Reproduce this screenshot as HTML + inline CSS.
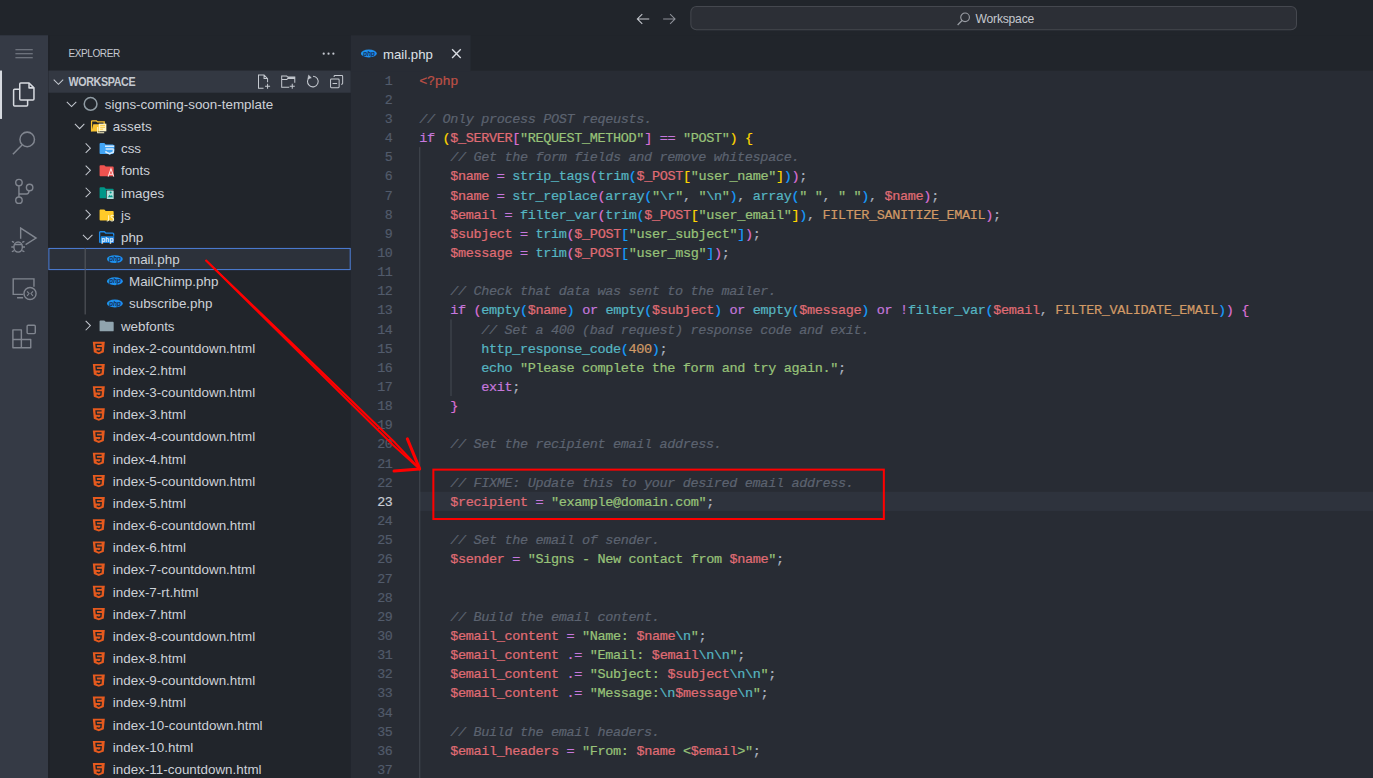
<!DOCTYPE html><html><head><meta charset="utf-8"><style>*{margin:0;padding:0;box-sizing:border-box}
html,body{width:1373px;height:778px;overflow:hidden;background:#21252b}
#root{position:absolute;left:0;top:0;width:1363px;height:772px;transform:scale(1.0078);transform-origin:0 0;overflow:hidden;font-family:"Liberation Sans",sans-serif}
.abs{position:absolute}
#title{left:0;top:0;width:1363px;height:35px;background:#21252b}
#act{left:0;top:35px;width:48px;height:737px;background:#353a45}
#side{left:48px;top:35px;width:300px;height:737px;background:#21252b}
#tabs{left:348px;top:35px;width:1015px;height:35px;background:#21252b}
#editor{left:348px;top:70px;width:1015px;height:702px;background:#282c34}
.row{position:absolute;height:22px;font-size:13.3px;line-height:22px;color:#cdd1d8;white-space:pre}
.row .tx{position:absolute;top:0.5px}
.ln{position:absolute;left:0;width:41.5px;text-align:right;font-family:"Liberation Mono",monospace;font-size:13.2px;letter-spacing:-0.3px;margin-top:1px;-webkit-text-stroke:0.2px currentColor;line-height:19px;height:19px;color:#525b6b;white-space:pre}
.cl{position:absolute;left:68px;font-family:"Liberation Mono",monospace;font-size:13.4px;letter-spacing:-0.343px;line-height:19px;height:19px;white-space:pre;color:#abb2bf;margin-top:0.6px;-webkit-text-stroke:0.2px currentColor}
.c{color:#5c6370;font-style:italic}
.k{color:#c678dd}.o{color:#c678dd}
.v{color:#e06c75}.s{color:#98c379}.f{color:#56b6c2}.e{color:#56b6c2}
.p{color:#abb2bf}.n{color:#d19a66}.K{color:#d19a66}.t{color:#be5046}
.b1{color:#ffd700}.b2{color:#da70d6}.b3{color:#179fff}
</style></head><body><div id="root">
<div id="title" class="abs"></div><div id="act" class="abs"></div><div id="side" class="abs"></div><div id="tabs" class="abs"></div><div id="editor" class="abs"></div>
<div class="abs" style="left:48px;top:35px;width:1px;height:737px;background:#1e2126"></div>
<svg class="abs" style="left:630px;top:10.6px" width="16" height="16" viewBox="0 0 16 16"><path d="M7.3 2.9 2.4 7.8 7.3 12.7M2.6 7.8H14.2" fill="none" stroke="#c5c8ce" stroke-width="1.05"/></svg>
<svg class="abs" style="left:656px;top:10.6px" width="16" height="16" viewBox="0 0 16 16"><path d="M8.9 2.9 13.8 7.8 8.9 12.7M13.6 7.8H2" fill="none" stroke="#8d9098" stroke-width="1.05"/></svg>
<div class="abs" style="left:685px;top:6px;width:602px;height:24px;border:1px solid #45484f;border-radius:6px;background:#2c2f36"></div>
<svg class="abs" style="left:948px;top:10.5px" width="16" height="16" viewBox="0 0 16 16"><circle cx="9.6" cy="6.2" r="4.3" fill="none" stroke="#9a9da4" stroke-width="1.1"/><path d="M6.6 9.3 2.2 13.8" stroke="#9a9da4" stroke-width="1.2"/></svg>
<div class="abs" style="left:968px;top:11px;font-size:12px;line-height:16px;color:#c5c8ce;letter-spacing:-0.2px">Workspace</div>
<svg class="abs" style="left:0;top:35px" width="48" height="35"><path d="M15.3 14.3H32.5M15.3 18.3H32.5M15.3 22.4H32.5" stroke="#80858f" stroke-width="1"/></svg>
<div class="abs" style="left:0;top:70px;width:2px;height:48px;background:#d7dae0"></div>
<svg class="abs" style="left:0;top:70px" width="48" height="48"><g fill="none" stroke="#d7dae0" stroke-width="1.5" stroke-linejoin="round">
<path d="M19.6 13.3Q19.6 12.3 20.6 12.3H28.8L33.7 17.2V28.3Q33.7 29.3 32.7 29.3H20.6Q19.6 29.3 19.6 28.3Z"/><path d="M28.8 12.3V17.2H33.7"/>
<path d="M19.6 18.6H14.5Q13.5 18.6 13.5 19.6V34.1Q13.5 35.1 14.5 35.1H26.4Q27.4 35.1 27.4 34.1V29.3"/></g></svg>
<svg class="abs" style="left:0;top:118px" width="48" height="48"><g fill="none" stroke="#80858f" stroke-width="1.5"><circle cx="27" cy="20.3" r="7.2"/><path d="M12.8 35 21.9 25.9"/></g></svg>
<svg class="abs" style="left:0;top:166px" width="48" height="48"><g fill="none" stroke="#80858f" stroke-width="1.4"><circle cx="18.8" cy="15.2" r="3.2"/><circle cx="29.4" cy="20" r="3.2"/><circle cx="18.8" cy="32.6" r="3.2"/><path d="M18.8 18.4V29.4M19 26.5H26.2Q28.6 26.5 28.9 23.2"/></g></svg>
<svg class="abs" style="left:0;top:214px" width="48" height="48"><g fill="none" stroke="#80858f" stroke-width="1.4" stroke-linejoin="miter"><path d="M20.5 22.9V12.3L35.8 22.2 25.4 28.8"/><ellipse cx="18" cy="31.2" rx="4.2" ry="5"/><path d="M14 28.6H22M14 26.6 11.8 25.6M22 26.6 24.2 25.6M13.8 31.1H11.2M22.2 31.1H24.8M14 34.6 11.8 35.8M22 34.6 24.2 35.8"/></g></svg>
<svg class="abs" style="left:0;top:262px" width="48" height="48"><g fill="none" stroke="#80858f" stroke-width="1.4"><path d="M23.2 30.1H13.1V14.75H33.7V22.6"/><path d="M16.9 33.4H22.9"/><circle cx="29.8" cy="29.2" r="6"/><path d="M26.9 27.1 28.8 29.3 26.9 31.5M32.7 27.1 30.8 29.3 32.7 31.5" stroke-width="1.1"/></g></svg>
<svg class="abs" style="left:0;top:310px" width="48" height="48"><g fill="none" stroke="#80858f" stroke-width="1.4" stroke-linejoin="round"><path d="M12.8 17.3H21.2V26.9H30.5V35H12.8Z"/><path d="M12.8 26.9H21.2V35"/><rect x="26.9" y="12.7" width="8.1" height="8.3" rx="1"/></g></svg>
<div class="abs" style="left:68px;top:44.8px;font-size:11.6px;line-height:16px;color:#c5c9d0;letter-spacing:-0.5px;transform:scaleX(0.86);transform-origin:0 0">EXPLORER</div>
<svg class="abs" style="left:318px;top:45px" width="16" height="16" viewBox="0 0 16 16"><g fill="#c5c9d0"><circle cx="3.2" cy="8.3" r="1.1"/><circle cx="8" cy="8.3" r="1.1"/><circle cx="12.8" cy="8.3" r="1.1"/></g></svg>
<div class="abs" style="left:48px;top:70px;width:300px;height:22px;background:#333842"></div>
<svg class="abs" style="left:50px;top:73px" width="16" height="16" viewBox="0 0 16 16"><path d="M3.3 6 8 10.7 12.7 6" fill="none" stroke="#c5c9d0" stroke-width="1"/></svg>
<div class="abs" style="left:68px;top:72.6px;font-size:11.8px;font-weight:bold;line-height:16px;color:#c5c9d0;letter-spacing:-0.4px;transform:scaleX(0.9);transform-origin:0 0">WORKSPACE</div>
<svg class="abs" style="left:252.5px;top:73px" width="16" height="16" viewBox="0 0 16 16"><g fill="none" stroke="#c5c9d0" stroke-width="1"><path d="M8.5 14.5H3.5V1.5H9L12.5 5V8.5M9 1.5V5H12.5M12.5 10V15M10 12.5H15"/></g></svg>
<svg class="abs" style="left:278px;top:73px" width="16" height="16" viewBox="0 0 16 16"><g fill="none" stroke="#c5c9d0" stroke-width="1"><path d="M9 13.5H1.5V2.5H6.5L7.5 3.5H14.5V9M1.5 6H6.5L7.5 5H14.5M12 10V15M9.5 12.5H14.5"/><rect x="7.5" y="3.5" width="7" height="1.5" fill="#c5c9d0" stroke="none"/></g></svg>
<svg class="abs" style="left:302px;top:73px" width="16" height="16" viewBox="0 0 16 16"><g fill="none" stroke="#c5c9d0" stroke-width="1.05"><path d="M5.6 3.4A5.3 5.3 0 1 0 8.6 2.6"/><path d="M4.2 1.6 6.9 4.2 3.6 5.2Z" fill="#c5c9d0" stroke-width="0.6"/></g></svg>
<svg class="abs" style="left:326px;top:73px" width="16" height="16" viewBox="0 0 16 16"><g fill="none" stroke="#c5c9d0" stroke-width="1"><path d="M5.5 3.5V2.8Q5.5 2 6.3 2H13.2Q14 2 14 2.8V9.7Q14 10.5 13.2 10.5H12.5"/><rect x="2" y="5.5" width="8.5" height="8.5" rx="0.8"/><path d="M4 9.8H8.5"/></g></svg>
<div class="abs" style="left:48px;top:246px;width:300px;height:22px;background:#2c313a;border:1px solid #4d7fd9"></div>
<div class="abs" style="left:83.6px;top:246px;width:1px;height:66px;background:#585b61"></div>
<div class="row" style="left:48px;top:92px;width:300px"><div style="position:absolute;left:-48px;top:0;width:348px;height:22px"><svg class="abs" style="left:63px;top:3px" width="16" height="16" viewBox="0 0 16 16"><path d="M3.3 6 8 10.7 12.7 6" fill="none" stroke="#c5c9d0" stroke-width="1"/></svg><svg class="abs" style="left:82px;top:3px" width="16" height="16" viewBox="0 0 16 16"><circle cx="7.9" cy="8.1" r="6.3" fill="none" stroke="#8f9ba3" stroke-width="1.5"/></svg><span class="tx" style="left:104px">signs-coming-soon-template</span></div></div>
<div class="row" style="left:48px;top:114px;width:300px"><div style="position:absolute;left:-48px;top:0;width:348px;height:22px"><svg class="abs" style="left:71px;top:3px" width="16" height="16" viewBox="0 0 16 16"><path d="M3.3 6 8 10.7 12.7 6" fill="none" stroke="#c5c9d0" stroke-width="1"/></svg><svg class="abs" style="left:90px;top:3px" width="16" height="16" viewBox="0 0 16 16"><path d="M0.8 13.6V3.7Q0.8 2.9 1.6 2.9H5.6L6.8 4H13.4V6" fill="none" stroke="#f9c330" stroke-width="1.3"/><path d="M2.6 6.3H9.2V13.6H0.8Z" fill="#f9c330"/><rect x="8" y="5.7" width="7.6" height="7.6" fill="#fff6c8"/><path d="M9.4 7.4H14.2M9.4 9.3H14.2M9.4 11.2H12.3" stroke="#f9c330" stroke-width="0.9"/><path d="M6.9 9V14.8H13.4" fill="none" stroke="#fff6c8" stroke-width="1"/></svg><span class="tx" style="left:112px">assets</span></div></div>
<div class="row" style="left:48px;top:136px;width:300px"><div style="position:absolute;left:-48px;top:0;width:348px;height:22px"><svg class="abs" style="left:79px;top:3px" width="16" height="16" viewBox="0 0 16 16"><path d="M6 3.3 10.7 8 6 12.7" fill="none" stroke="#c5c9d0" stroke-width="1"/></svg><svg class="abs" style="left:98px;top:3px" width="16" height="16" viewBox="0 0 16 16"><path d="M0.8 3.8Q0.8 2.9 1.7 2.9H5.5L6.9 4.3H13.9Q14.8 4.3 14.8 5.2V12.9Q14.8 13.8 13.9 13.8H1.7Q0.8 13.8 0.8 12.9Z" fill="#42a5f5"/><path d="M5.8 5.2H15.8L15.2 12.6 10.8 14.6 6.4 12.6Z" fill="#42a5f5"/><path d="M6.2 6.1H15.2M6.8 8.9H14.7M14.7 8.9 14.4 12 10.8 13.6 7.2 12 7 11" fill="none" stroke="#d6eafc" stroke-width="1.5"/></svg><span class="tx" style="left:120px">css</span></div></div>
<div class="row" style="left:48px;top:158px;width:300px"><div style="position:absolute;left:-48px;top:0;width:348px;height:22px"><svg class="abs" style="left:79px;top:3px" width="16" height="16" viewBox="0 0 16 16"><path d="M6 3.3 10.7 8 6 12.7" fill="none" stroke="#c5c9d0" stroke-width="1"/></svg><svg class="abs" style="left:98px;top:3px" width="16" height="16" viewBox="0 0 16 16"><path d="M0.8 3.8Q0.8 2.9 1.7 2.9H5.5L6.9 4.3H13.9Q14.8 4.3 14.8 5.2V12.9Q14.8 13.8 13.9 13.8H1.7Q0.8 13.8 0.8 12.9Z" fill="#ef5350"/><path d="M9.3 14.2 12.1 6.4 14.9 14.2M10.3 11.8H13.9" fill="none" stroke="#ffe4e4" stroke-width="1"/></svg><span class="tx" style="left:120px">fonts</span></div></div>
<div class="row" style="left:48px;top:180px;width:300px"><div style="position:absolute;left:-48px;top:0;width:348px;height:22px"><svg class="abs" style="left:79px;top:3px" width="16" height="16" viewBox="0 0 16 16"><path d="M6 3.3 10.7 8 6 12.7" fill="none" stroke="#c5c9d0" stroke-width="1"/></svg><svg class="abs" style="left:98px;top:3px" width="16" height="16" viewBox="0 0 16 16"><path d="M0.8 3.8Q0.8 2.9 1.7 2.9H5.5L6.9 4.3H13.9Q14.8 4.3 14.8 5.2V12.9Q14.8 13.8 13.9 13.8H1.7Q0.8 13.8 0.8 12.9Z" fill="#009688"/><rect x="7.3" y="5.6" width="8.2" height="9.4" fill="#21252b"/><rect x="7.9" y="6.1" width="6.9" height="8.3" rx="0.5" fill="#b2dfdb"/><path d="M9 12.6 10.8 10.2 12 11.6 13 10.6 14 12.6Z" fill="#009688"/><circle cx="11.8" cy="8" r="1" fill="#009688"/></svg><span class="tx" style="left:120px">images</span></div></div>
<div class="row" style="left:48px;top:202px;width:300px"><div style="position:absolute;left:-48px;top:0;width:348px;height:22px"><svg class="abs" style="left:79px;top:3px" width="16" height="16" viewBox="0 0 16 16"><path d="M6 3.3 10.7 8 6 12.7" fill="none" stroke="#c5c9d0" stroke-width="1"/></svg><svg class="abs" style="left:98px;top:3px" width="16" height="16" viewBox="0 0 16 16"><path d="M0.8 3.8Q0.8 2.9 1.7 2.9H5.5L6.9 4.3H13.9Q14.8 4.3 14.8 5.2V12.9Q14.8 13.8 13.9 13.8H1.7Q0.8 13.8 0.8 12.9Z" fill="#ffca28"/><path d="M9.8 8.6V12.9Q9.8 14.3 8.4 14.3H7.9M14.7 9.2Q14.3 8.5 13.3 8.5 12 8.5 12 9.6 12 10.5 13.4 11 14.8 11.5 14.8 12.5 14.8 14.3 13.3 14.3 12.1 14.3 11.7 13.5" fill="none" stroke="#fff8c4" stroke-width="1.05"/></svg><span class="tx" style="left:120px">js</span></div></div>
<div class="row" style="left:48px;top:224px;width:300px"><div style="position:absolute;left:-48px;top:0;width:348px;height:22px"><svg class="abs" style="left:79px;top:3px" width="16" height="16" viewBox="0 0 16 16"><path d="M3.3 6 8 10.7 12.7 6" fill="none" stroke="#c5c9d0" stroke-width="1"/></svg><svg class="abs" style="left:98px;top:3px" width="16" height="16" viewBox="0 0 16 16"><path d="M0.8 13.8V3.8Q0.8 2.9 1.7 2.9H5.5L6.9 4.3H13.9Q14.8 4.3 14.8 5.2V7" fill="none" stroke="#1e88e5" stroke-width="1.4"/><path d="M2.2 7.4H15.4L15 14.2H1.6Z" fill="#1e88e5"/><text x="8.6" y="13.4" font-family="Liberation Sans" font-weight="bold" font-size="6.4" fill="#eaf4ff" text-anchor="middle" letter-spacing="0.2">php</text></svg><span class="tx" style="left:120px">php</span></div></div>
<div class="row" style="left:48px;top:246px;width:300px"><div style="position:absolute;left:-48px;top:0;width:348px;height:22px"><svg class="abs" style="left:106px;top:3px" width="16" height="16" viewBox="0 0 16 16"><ellipse cx="8" cy="8.1" rx="7.9" ry="3.9" fill="#1e90ee"/><text x="8" y="10.3" font-family="Liberation Sans" font-style="italic" font-weight="bold" font-size="6.6" fill="#14305a" text-anchor="middle" letter-spacing="-0.2">php</text></svg><span class="tx" style="left:128px">mail.php</span></div></div>
<div class="row" style="left:48px;top:268px;width:300px"><div style="position:absolute;left:-48px;top:0;width:348px;height:22px"><svg class="abs" style="left:106px;top:3px" width="16" height="16" viewBox="0 0 16 16"><ellipse cx="8" cy="8.1" rx="7.9" ry="3.9" fill="#1e90ee"/><text x="8" y="10.3" font-family="Liberation Sans" font-style="italic" font-weight="bold" font-size="6.6" fill="#14305a" text-anchor="middle" letter-spacing="-0.2">php</text></svg><span class="tx" style="left:128px">MailChimp.php</span></div></div>
<div class="row" style="left:48px;top:290px;width:300px"><div style="position:absolute;left:-48px;top:0;width:348px;height:22px"><svg class="abs" style="left:106px;top:3px" width="16" height="16" viewBox="0 0 16 16"><ellipse cx="8" cy="8.1" rx="7.9" ry="3.9" fill="#1e90ee"/><text x="8" y="10.3" font-family="Liberation Sans" font-style="italic" font-weight="bold" font-size="6.6" fill="#14305a" text-anchor="middle" letter-spacing="-0.2">php</text></svg><span class="tx" style="left:128px">subscribe.php</span></div></div>
<div class="row" style="left:48px;top:312px;width:300px"><div style="position:absolute;left:-48px;top:0;width:348px;height:22px"><svg class="abs" style="left:79px;top:3px" width="16" height="16" viewBox="0 0 16 16"><path d="M6 3.3 10.7 8 6 12.7" fill="none" stroke="#c5c9d0" stroke-width="1"/></svg><svg class="abs" style="left:98px;top:3px" width="16" height="16" viewBox="0 0 16 16"><path d="M0.8 3.8Q0.8 2.9 1.7 2.9H5.5L6.9 4.3H13.9Q14.8 4.3 14.8 5.2V12.9Q14.8 13.8 13.9 13.8H1.7Q0.8 13.8 0.8 12.9Z" fill="#90a4ae"/></svg><span class="tx" style="left:120px">webfonts</span></div></div>
<div class="row" style="left:48px;top:334px;width:300px"><div style="position:absolute;left:-48px;top:0;width:348px;height:22px"><svg class="abs" style="left:90px;top:3px" width="16" height="16" viewBox="0 0 16 16"><path d="M2.1 2.2H14L13 12.6 8 14.5 3.1 12.6Z" fill="#e65a1e"/><path d="M10.8 4.7H5.3L5.6 7.9H10.4L10.1 10.9 8 11.7 5.9 10.9" fill="none" stroke="#21252b" stroke-width="1.35"/></svg><span class="tx" style="left:112px">index-2-countdown.html</span></div></div>
<div class="row" style="left:48px;top:356px;width:300px"><div style="position:absolute;left:-48px;top:0;width:348px;height:22px"><svg class="abs" style="left:90px;top:3px" width="16" height="16" viewBox="0 0 16 16"><path d="M2.1 2.2H14L13 12.6 8 14.5 3.1 12.6Z" fill="#e65a1e"/><path d="M10.8 4.7H5.3L5.6 7.9H10.4L10.1 10.9 8 11.7 5.9 10.9" fill="none" stroke="#21252b" stroke-width="1.35"/></svg><span class="tx" style="left:112px">index-2.html</span></div></div>
<div class="row" style="left:48px;top:378px;width:300px"><div style="position:absolute;left:-48px;top:0;width:348px;height:22px"><svg class="abs" style="left:90px;top:3px" width="16" height="16" viewBox="0 0 16 16"><path d="M2.1 2.2H14L13 12.6 8 14.5 3.1 12.6Z" fill="#e65a1e"/><path d="M10.8 4.7H5.3L5.6 7.9H10.4L10.1 10.9 8 11.7 5.9 10.9" fill="none" stroke="#21252b" stroke-width="1.35"/></svg><span class="tx" style="left:112px">index-3-countdown.html</span></div></div>
<div class="row" style="left:48px;top:400px;width:300px"><div style="position:absolute;left:-48px;top:0;width:348px;height:22px"><svg class="abs" style="left:90px;top:3px" width="16" height="16" viewBox="0 0 16 16"><path d="M2.1 2.2H14L13 12.6 8 14.5 3.1 12.6Z" fill="#e65a1e"/><path d="M10.8 4.7H5.3L5.6 7.9H10.4L10.1 10.9 8 11.7 5.9 10.9" fill="none" stroke="#21252b" stroke-width="1.35"/></svg><span class="tx" style="left:112px">index-3.html</span></div></div>
<div class="row" style="left:48px;top:422px;width:300px"><div style="position:absolute;left:-48px;top:0;width:348px;height:22px"><svg class="abs" style="left:90px;top:3px" width="16" height="16" viewBox="0 0 16 16"><path d="M2.1 2.2H14L13 12.6 8 14.5 3.1 12.6Z" fill="#e65a1e"/><path d="M10.8 4.7H5.3L5.6 7.9H10.4L10.1 10.9 8 11.7 5.9 10.9" fill="none" stroke="#21252b" stroke-width="1.35"/></svg><span class="tx" style="left:112px">index-4-countdown.html</span></div></div>
<div class="row" style="left:48px;top:444px;width:300px"><div style="position:absolute;left:-48px;top:0;width:348px;height:22px"><svg class="abs" style="left:90px;top:3px" width="16" height="16" viewBox="0 0 16 16"><path d="M2.1 2.2H14L13 12.6 8 14.5 3.1 12.6Z" fill="#e65a1e"/><path d="M10.8 4.7H5.3L5.6 7.9H10.4L10.1 10.9 8 11.7 5.9 10.9" fill="none" stroke="#21252b" stroke-width="1.35"/></svg><span class="tx" style="left:112px">index-4.html</span></div></div>
<div class="row" style="left:48px;top:466px;width:300px"><div style="position:absolute;left:-48px;top:0;width:348px;height:22px"><svg class="abs" style="left:90px;top:3px" width="16" height="16" viewBox="0 0 16 16"><path d="M2.1 2.2H14L13 12.6 8 14.5 3.1 12.6Z" fill="#e65a1e"/><path d="M10.8 4.7H5.3L5.6 7.9H10.4L10.1 10.9 8 11.7 5.9 10.9" fill="none" stroke="#21252b" stroke-width="1.35"/></svg><span class="tx" style="left:112px">index-5-countdown.html</span></div></div>
<div class="row" style="left:48px;top:488px;width:300px"><div style="position:absolute;left:-48px;top:0;width:348px;height:22px"><svg class="abs" style="left:90px;top:3px" width="16" height="16" viewBox="0 0 16 16"><path d="M2.1 2.2H14L13 12.6 8 14.5 3.1 12.6Z" fill="#e65a1e"/><path d="M10.8 4.7H5.3L5.6 7.9H10.4L10.1 10.9 8 11.7 5.9 10.9" fill="none" stroke="#21252b" stroke-width="1.35"/></svg><span class="tx" style="left:112px">index-5.html</span></div></div>
<div class="row" style="left:48px;top:510px;width:300px"><div style="position:absolute;left:-48px;top:0;width:348px;height:22px"><svg class="abs" style="left:90px;top:3px" width="16" height="16" viewBox="0 0 16 16"><path d="M2.1 2.2H14L13 12.6 8 14.5 3.1 12.6Z" fill="#e65a1e"/><path d="M10.8 4.7H5.3L5.6 7.9H10.4L10.1 10.9 8 11.7 5.9 10.9" fill="none" stroke="#21252b" stroke-width="1.35"/></svg><span class="tx" style="left:112px">index-6-countdown.html</span></div></div>
<div class="row" style="left:48px;top:532px;width:300px"><div style="position:absolute;left:-48px;top:0;width:348px;height:22px"><svg class="abs" style="left:90px;top:3px" width="16" height="16" viewBox="0 0 16 16"><path d="M2.1 2.2H14L13 12.6 8 14.5 3.1 12.6Z" fill="#e65a1e"/><path d="M10.8 4.7H5.3L5.6 7.9H10.4L10.1 10.9 8 11.7 5.9 10.9" fill="none" stroke="#21252b" stroke-width="1.35"/></svg><span class="tx" style="left:112px">index-6.html</span></div></div>
<div class="row" style="left:48px;top:554px;width:300px"><div style="position:absolute;left:-48px;top:0;width:348px;height:22px"><svg class="abs" style="left:90px;top:3px" width="16" height="16" viewBox="0 0 16 16"><path d="M2.1 2.2H14L13 12.6 8 14.5 3.1 12.6Z" fill="#e65a1e"/><path d="M10.8 4.7H5.3L5.6 7.9H10.4L10.1 10.9 8 11.7 5.9 10.9" fill="none" stroke="#21252b" stroke-width="1.35"/></svg><span class="tx" style="left:112px">index-7-countdown.html</span></div></div>
<div class="row" style="left:48px;top:576px;width:300px"><div style="position:absolute;left:-48px;top:0;width:348px;height:22px"><svg class="abs" style="left:90px;top:3px" width="16" height="16" viewBox="0 0 16 16"><path d="M2.1 2.2H14L13 12.6 8 14.5 3.1 12.6Z" fill="#e65a1e"/><path d="M10.8 4.7H5.3L5.6 7.9H10.4L10.1 10.9 8 11.7 5.9 10.9" fill="none" stroke="#21252b" stroke-width="1.35"/></svg><span class="tx" style="left:112px">index-7-rt.html</span></div></div>
<div class="row" style="left:48px;top:598px;width:300px"><div style="position:absolute;left:-48px;top:0;width:348px;height:22px"><svg class="abs" style="left:90px;top:3px" width="16" height="16" viewBox="0 0 16 16"><path d="M2.1 2.2H14L13 12.6 8 14.5 3.1 12.6Z" fill="#e65a1e"/><path d="M10.8 4.7H5.3L5.6 7.9H10.4L10.1 10.9 8 11.7 5.9 10.9" fill="none" stroke="#21252b" stroke-width="1.35"/></svg><span class="tx" style="left:112px">index-7.html</span></div></div>
<div class="row" style="left:48px;top:620px;width:300px"><div style="position:absolute;left:-48px;top:0;width:348px;height:22px"><svg class="abs" style="left:90px;top:3px" width="16" height="16" viewBox="0 0 16 16"><path d="M2.1 2.2H14L13 12.6 8 14.5 3.1 12.6Z" fill="#e65a1e"/><path d="M10.8 4.7H5.3L5.6 7.9H10.4L10.1 10.9 8 11.7 5.9 10.9" fill="none" stroke="#21252b" stroke-width="1.35"/></svg><span class="tx" style="left:112px">index-8-countdown.html</span></div></div>
<div class="row" style="left:48px;top:642px;width:300px"><div style="position:absolute;left:-48px;top:0;width:348px;height:22px"><svg class="abs" style="left:90px;top:3px" width="16" height="16" viewBox="0 0 16 16"><path d="M2.1 2.2H14L13 12.6 8 14.5 3.1 12.6Z" fill="#e65a1e"/><path d="M10.8 4.7H5.3L5.6 7.9H10.4L10.1 10.9 8 11.7 5.9 10.9" fill="none" stroke="#21252b" stroke-width="1.35"/></svg><span class="tx" style="left:112px">index-8.html</span></div></div>
<div class="row" style="left:48px;top:664px;width:300px"><div style="position:absolute;left:-48px;top:0;width:348px;height:22px"><svg class="abs" style="left:90px;top:3px" width="16" height="16" viewBox="0 0 16 16"><path d="M2.1 2.2H14L13 12.6 8 14.5 3.1 12.6Z" fill="#e65a1e"/><path d="M10.8 4.7H5.3L5.6 7.9H10.4L10.1 10.9 8 11.7 5.9 10.9" fill="none" stroke="#21252b" stroke-width="1.35"/></svg><span class="tx" style="left:112px">index-9-countdown.html</span></div></div>
<div class="row" style="left:48px;top:686px;width:300px"><div style="position:absolute;left:-48px;top:0;width:348px;height:22px"><svg class="abs" style="left:90px;top:3px" width="16" height="16" viewBox="0 0 16 16"><path d="M2.1 2.2H14L13 12.6 8 14.5 3.1 12.6Z" fill="#e65a1e"/><path d="M10.8 4.7H5.3L5.6 7.9H10.4L10.1 10.9 8 11.7 5.9 10.9" fill="none" stroke="#21252b" stroke-width="1.35"/></svg><span class="tx" style="left:112px">index-9.html</span></div></div>
<div class="row" style="left:48px;top:708px;width:300px"><div style="position:absolute;left:-48px;top:0;width:348px;height:22px"><svg class="abs" style="left:90px;top:3px" width="16" height="16" viewBox="0 0 16 16"><path d="M2.1 2.2H14L13 12.6 8 14.5 3.1 12.6Z" fill="#e65a1e"/><path d="M10.8 4.7H5.3L5.6 7.9H10.4L10.1 10.9 8 11.7 5.9 10.9" fill="none" stroke="#21252b" stroke-width="1.35"/></svg><span class="tx" style="left:112px">index-10-countdown.html</span></div></div>
<div class="row" style="left:48px;top:730px;width:300px"><div style="position:absolute;left:-48px;top:0;width:348px;height:22px"><svg class="abs" style="left:90px;top:3px" width="16" height="16" viewBox="0 0 16 16"><path d="M2.1 2.2H14L13 12.6 8 14.5 3.1 12.6Z" fill="#e65a1e"/><path d="M10.8 4.7H5.3L5.6 7.9H10.4L10.1 10.9 8 11.7 5.9 10.9" fill="none" stroke="#21252b" stroke-width="1.35"/></svg><span class="tx" style="left:112px">index-10.html</span></div></div>
<div class="row" style="left:48px;top:752px;width:300px"><div style="position:absolute;left:-48px;top:0;width:348px;height:22px"><svg class="abs" style="left:90px;top:3px" width="16" height="16" viewBox="0 0 16 16"><path d="M2.1 2.2H14L13 12.6 8 14.5 3.1 12.6Z" fill="#e65a1e"/><path d="M10.8 4.7H5.3L5.6 7.9H10.4L10.1 10.9 8 11.7 5.9 10.9" fill="none" stroke="#21252b" stroke-width="1.35"/></svg><span class="tx" style="left:112px">index-11-countdown.html</span></div></div>
<div class="abs" style="left:348px;top:35px;width:119px;height:36px;background:#282c34"></div>
<svg class="abs" style="left:358px;top:45px" width="16" height="16" viewBox="0 0 16 16"><ellipse cx="8" cy="8.1" rx="7.9" ry="3.9" fill="#1e90ee"/><text x="8" y="10.3" font-family="Liberation Sans" font-style="italic" font-weight="bold" font-size="6.6" fill="#14305a" text-anchor="middle" letter-spacing="-0.2">php</text></svg>
<div class="abs" style="left:380px;top:46.8px;font-size:13.1px;line-height:16px;color:#dfe2e7">mail.php</div>
<svg class="abs" style="left:445px;top:45px" width="16" height="16" viewBox="0 0 16 16"><path d="M3.6 3.9 12.2 12.5M12.2 3.9 3.6 12.5" stroke="#d7dae0" stroke-width="1.35"/></svg>
<div class="abs" style="left:348px;top:70px;width:1015px;height:702px;overflow:hidden"><div class="abs" style="left:68px;top:418px;width:947px;height:19px;background:#2e333d"></div><div class="abs" style="left:68px;top:76px;width:1px;height:627px;background:#454a53"></div><div class="abs" style="left:98.79px;top:247px;width:1px;height:76px;background:#454a53"></div><div class="ln" style="top:0px;color:#525b6b"> 1</div><div class="cl" style="top:0px"><span class="t">&lt;?php</span></div><div class="ln" style="top:19px;color:#525b6b"> 2</div><div class="ln" style="top:38px;color:#525b6b"> 3</div><div class="cl" style="top:38px"><span class="c">// Only process POST reqeusts.</span></div><div class="ln" style="top:57px;color:#525b6b"> 4</div><div class="cl" style="top:57px"><span class="k">if</span><span class="p"> </span><span class="b1">(</span><span class="v">$_SERVER</span><span class="b2">[</span><span class="s">&quot;REQUEST_METHOD&quot;</span><span class="b2">]</span><span class="p"> </span><span class="o">==</span><span class="p"> </span><span class="s">&quot;POST&quot;</span><span class="b1">)</span><span class="p"> </span><span class="b1">{</span></div><div class="ln" style="top:76px;color:#525b6b"> 5</div><div class="cl" style="top:76px"><span class="p">    </span><span class="c">// Get the form fields and remove whitespace.</span></div><div class="ln" style="top:95px;color:#525b6b"> 6</div><div class="cl" style="top:95px"><span class="p">    </span><span class="v">$name</span><span class="p"> </span><span class="o">=</span><span class="p"> </span><span class="f">strip_tags</span><span class="b2">(</span><span class="f">trim</span><span class="b3">(</span><span class="v">$_POST</span><span class="b1">[</span><span class="s">&quot;user_name&quot;</span><span class="b1">]</span><span class="b3">)</span><span class="b2">)</span><span class="p">;</span></div><div class="ln" style="top:114px;color:#525b6b"> 7</div><div class="cl" style="top:114px"><span class="p">    </span><span class="v">$name</span><span class="p"> </span><span class="o">=</span><span class="p"> </span><span class="f">str_replace</span><span class="b2">(</span><span class="f">array</span><span class="b3">(</span><span class="s">&quot;</span><span class="e">\r</span><span class="s">&quot;</span><span class="p">, </span><span class="s">&quot;</span><span class="e">\n</span><span class="s">&quot;</span><span class="b3">)</span><span class="p">, </span><span class="f">array</span><span class="b3">(</span><span class="s">&quot; &quot;</span><span class="p">, </span><span class="s">&quot; &quot;</span><span class="b3">)</span><span class="p">, </span><span class="v">$name</span><span class="b2">)</span><span class="p">;</span></div><div class="ln" style="top:133px;color:#525b6b"> 8</div><div class="cl" style="top:133px"><span class="p">    </span><span class="v">$email</span><span class="p"> </span><span class="o">=</span><span class="p"> </span><span class="f">filter_var</span><span class="b2">(</span><span class="f">trim</span><span class="b3">(</span><span class="v">$_POST</span><span class="b1">[</span><span class="s">&quot;user_email&quot;</span><span class="b1">]</span><span class="b3">)</span><span class="p">, </span><span class="K">FILTER_SANITIZE_EMAIL</span><span class="b2">)</span><span class="p">;</span></div><div class="ln" style="top:152px;color:#525b6b"> 9</div><div class="cl" style="top:152px"><span class="p">    </span><span class="v">$subject</span><span class="p"> </span><span class="o">=</span><span class="p"> </span><span class="f">trim</span><span class="b2">(</span><span class="v">$_POST</span><span class="b3">[</span><span class="s">&quot;user_subject&quot;</span><span class="b3">]</span><span class="b2">)</span><span class="p">;</span></div><div class="ln" style="top:171px;color:#525b6b">10</div><div class="cl" style="top:171px"><span class="p">    </span><span class="v">$message</span><span class="p"> </span><span class="o">=</span><span class="p"> </span><span class="f">trim</span><span class="b2">(</span><span class="v">$_POST</span><span class="b3">[</span><span class="s">&quot;user_msg&quot;</span><span class="b3">]</span><span class="b2">)</span><span class="p">;</span></div><div class="ln" style="top:190px;color:#525b6b">11</div><div class="ln" style="top:209px;color:#525b6b">12</div><div class="cl" style="top:209px"><span class="p">    </span><span class="c">// Check that data was sent to the mailer.</span></div><div class="ln" style="top:228px;color:#525b6b">13</div><div class="cl" style="top:228px"><span class="p">    </span><span class="k">if</span><span class="p"> </span><span class="b2">(</span><span class="f">empty</span><span class="b3">(</span><span class="v">$name</span><span class="b3">)</span><span class="p"> </span><span class="k">or</span><span class="p"> </span><span class="f">empty</span><span class="b3">(</span><span class="v">$subject</span><span class="b3">)</span><span class="p"> </span><span class="k">or</span><span class="p"> </span><span class="f">empty</span><span class="b3">(</span><span class="v">$message</span><span class="b3">)</span><span class="p"> </span><span class="k">or</span><span class="p"> </span><span class="k">!</span><span class="f">filter_var</span><span class="b3">(</span><span class="v">$email</span><span class="p">, </span><span class="K">FILTER_VALIDATE_EMAIL</span><span class="b3">)</span><span class="b2">)</span><span class="p"> </span><span class="b2">{</span></div><div class="ln" style="top:247px;color:#525b6b">14</div><div class="cl" style="top:247px"><span class="p">        </span><span class="c">// Set a 400 (bad request) response code and exit.</span></div><div class="ln" style="top:266px;color:#525b6b">15</div><div class="cl" style="top:266px"><span class="p">        </span><span class="f">http_response_code</span><span class="b3">(</span><span class="n">400</span><span class="b3">)</span><span class="p">;</span></div><div class="ln" style="top:285px;color:#525b6b">16</div><div class="cl" style="top:285px"><span class="p">        </span><span class="f">echo</span><span class="p"> </span><span class="s">&quot;Please complete the form and try again.&quot;</span><span class="p">;</span></div><div class="ln" style="top:304px;color:#525b6b">17</div><div class="cl" style="top:304px"><span class="p">        </span><span class="k">exit</span><span class="p">;</span></div><div class="ln" style="top:323px;color:#525b6b">18</div><div class="cl" style="top:323px"><span class="p">    </span><span class="b2">}</span></div><div class="ln" style="top:342px;color:#525b6b">19</div><div class="ln" style="top:361px;color:#525b6b">20</div><div class="cl" style="top:361px"><span class="p">    </span><span class="c">// Set the recipient email address.</span></div><div class="ln" style="top:380px;color:#525b6b">21</div><div class="ln" style="top:399px;color:#525b6b">22</div><div class="cl" style="top:399px"><span class="p">    </span><span class="c">// FIXME: Update this to your desired email address.</span></div><div class="ln" style="top:418px;color:#c8ccd4">23</div><div class="cl" style="top:418px"><span class="p">    </span><span class="v">$recipient</span><span class="p"> </span><span class="o">=</span><span class="p"> </span><span class="s">&quot;example@domain.com&quot;</span><span class="p">;</span></div><div class="ln" style="top:437px;color:#525b6b">24</div><div class="ln" style="top:456px;color:#525b6b">25</div><div class="cl" style="top:456px"><span class="p">    </span><span class="c">// Set the email of sender.</span></div><div class="ln" style="top:475px;color:#525b6b">26</div><div class="cl" style="top:475px"><span class="p">    </span><span class="v">$sender</span><span class="p"> </span><span class="o">=</span><span class="p"> </span><span class="s">&quot;Signs - New contact from </span><span class="v">$name</span><span class="s">&quot;</span><span class="p">;</span></div><div class="ln" style="top:494px;color:#525b6b">27</div><div class="ln" style="top:513px;color:#525b6b">28</div><div class="ln" style="top:532px;color:#525b6b">29</div><div class="cl" style="top:532px"><span class="p">    </span><span class="c">// Build the email content.</span></div><div class="ln" style="top:551px;color:#525b6b">30</div><div class="cl" style="top:551px"><span class="p">    </span><span class="v">$email_content</span><span class="p"> </span><span class="o">=</span><span class="p"> </span><span class="s">&quot;Name: </span><span class="v">$name</span><span class="e">\n</span><span class="s">&quot;</span><span class="p">;</span></div><div class="ln" style="top:570px;color:#525b6b">31</div><div class="cl" style="top:570px"><span class="p">    </span><span class="v">$email_content</span><span class="p"> </span><span class="o">.=</span><span class="p"> </span><span class="s">&quot;Email: </span><span class="v">$email</span><span class="e">\n\n</span><span class="s">&quot;</span><span class="p">;</span></div><div class="ln" style="top:589px;color:#525b6b">32</div><div class="cl" style="top:589px"><span class="p">    </span><span class="v">$email_content</span><span class="p"> </span><span class="o">.=</span><span class="p"> </span><span class="s">&quot;Subject: </span><span class="v">$subject</span><span class="e">\n\n</span><span class="s">&quot;</span><span class="p">;</span></div><div class="ln" style="top:608px;color:#525b6b">33</div><div class="cl" style="top:608px"><span class="p">    </span><span class="v">$email_content</span><span class="p"> </span><span class="o">.=</span><span class="p"> </span><span class="s">&quot;Message:</span><span class="e">\n</span><span class="v">$message</span><span class="e">\n</span><span class="s">&quot;</span><span class="p">;</span></div><div class="ln" style="top:627px;color:#525b6b">34</div><div class="ln" style="top:646px;color:#525b6b">35</div><div class="cl" style="top:646px"><span class="p">    </span><span class="c">// Build the email headers.</span></div><div class="ln" style="top:665px;color:#525b6b">36</div><div class="cl" style="top:665px"><span class="p">    </span><span class="v">$email_headers</span><span class="p"> </span><span class="o">=</span><span class="p"> </span><span class="s">&quot;From: </span><span class="v">$name</span><span class="s"> &lt;</span><span class="v">$email</span><span class="s">&gt;&quot;</span><span class="p">;</span></div><div class="ln" style="top:684px;color:#525b6b">37</div><div class="ln" style="top:703px;color:#525b6b">38</div></div>
<div class="abs" style="left:428.7px;top:465px;width:449.3px;height:50.6px;border:2px solid #ff0000"></div>
<svg class="abs" style="left:0;top:0" width="1363" height="772"><g stroke="#ff0000" fill="none" stroke-linecap="round">
<path d="M204.6 258.6 L389.95 441.6 L416.4 465.3" stroke-width="2" stroke-linejoin="round"/>
<path d="M204.6 258.6 L392.05 439.4 L416.4 465.3" stroke-width="2" stroke-linejoin="round"/>
<path d="M404.2 435.5 L416.4 465.3" stroke-width="3"/>
<path d="M391 467.4 L416.4 465.3" stroke-width="3"/>
</g></svg>
</div></body></html>
